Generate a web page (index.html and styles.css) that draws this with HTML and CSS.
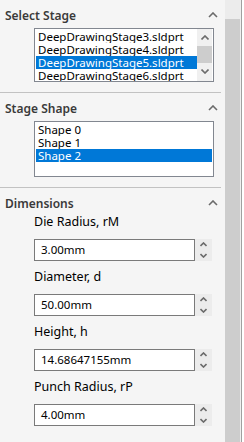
FILE: index.html
```html
<!DOCTYPE html>
<html lang="en">
<head>
    <meta charset="UTF-8">
    <meta name="viewport" content="width=device-width, initial-scale=1.0">
    <title>Deep Drawing Stage</title>
    <link rel="stylesheet" href="styles.css">
</head>
<body>
    <div class="window">
        <div class="panel">
            <!-- Stage picker -->
            <section class="group">
                <div class="group-head">
                    <span>Select Stage</span>
                    <svg class="chevron" width="10" height="6" viewBox="0 0 10 6"><polyline points="1,5 5,1 9,5"/></svg>
                </div>
                <div class="listbox stages">
                    <ul class="items">
                        <li>DeepDrawingStage3.sldprt</li>
                        <li>DeepDrawingStage4.sldprt</li>
                        <li class="selected">DeepDrawingStage5.sldprt</li>
                        <li>DeepDrawingStage6.sldprt</li>
                    </ul>
                    <div class="vscroll">
                        <div class="vbtn"><svg width="8" height="5" viewBox="0 0 8 5"><polyline points="0.5,4.5 4,1 7.5,4.5"/></svg></div>
                        <div class="vthumb"></div>
                        <div class="vbtn"><svg width="8" height="5" viewBox="0 0 8 5"><polyline points="0.5,0.5 4,4 7.5,0.5"/></svg></div>
                    </div>
                </div>
            </section>

            <!-- Shape picker -->
            <section class="group">
                <div class="group-head">
                    <span>Stage Shape</span>
                    <svg class="chevron" width="10" height="6" viewBox="0 0 10 6"><polyline points="1,5 5,1 9,5"/></svg>
                </div>
                <div class="listbox shapes">
                    <ul class="items">
                        <li>Shape 0</li>
                        <li>Shape 1</li>
                        <li class="selected">Shape 2</li>
                    </ul>
                </div>
            </section>

            <!-- Dimension fields -->
            <section class="group dims">
                <div class="group-head">
                    <span>Dimensions</span>
                    <svg class="chevron" width="10" height="6" viewBox="0 0 10 6"><polyline points="1,5 5,1 9,5"/></svg>
                </div>
                <div class="field">
                    <label>Die Radius, rM</label>
                    <div class="spin-row">
                        <div class="value">3.00mm</div>
                        <div class="spinner">
                            <div class="spin-btn"><svg width="7" height="5" viewBox="0 0 7 5"><polyline points="0.5,4 3.5,1 6.5,4"/></svg></div>
                            <div class="spin-btn"><svg width="7" height="5" viewBox="0 0 7 5"><polyline points="0.5,1 3.5,4 6.5,1"/></svg></div>
                        </div>
                    </div>
                </div>
                <div class="field">
                    <label>Diameter, d</label>
                    <div class="spin-row">
                        <div class="value">50.00mm</div>
                        <div class="spinner">
                            <div class="spin-btn"><svg width="7" height="5" viewBox="0 0 7 5"><polyline points="0.5,4 3.5,1 6.5,4"/></svg></div>
                            <div class="spin-btn"><svg width="7" height="5" viewBox="0 0 7 5"><polyline points="0.5,1 3.5,4 6.5,1"/></svg></div>
                        </div>
                    </div>
                </div>
                <div class="field">
                    <label>Height, h</label>
                    <div class="spin-row">
                        <div class="value">14.68647155mm</div>
                        <div class="spinner">
                            <div class="spin-btn"><svg width="7" height="5" viewBox="0 0 7 5"><polyline points="0.5,4 3.5,1 6.5,4"/></svg></div>
                            <div class="spin-btn"><svg width="7" height="5" viewBox="0 0 7 5"><polyline points="0.5,1 3.5,4 6.5,1"/></svg></div>
                        </div>
                    </div>
                </div>
                <div class="field">
                    <label>Punch Radius, rP</label>
                    <div class="spin-row">
                        <div class="value">4.00mm</div>
                        <div class="spinner">
                            <div class="spin-btn"><svg width="7" height="5" viewBox="0 0 7 5"><polyline points="0.5,4 3.5,1 6.5,4"/></svg></div>
                            <div class="spin-btn"><svg width="7" height="5" viewBox="0 0 7 5"><polyline points="0.5,1 3.5,4 6.5,1"/></svg></div>
                        </div>
                    </div>
                </div>
            </section>
        </div>

        <div class="scrollbar">
            <div class="track"></div>
            <div class="thumb"></div>
        </div>
        <div class="edge"></div>
    </div>
</body>
</html>
```

FILE: styles.css
```css
body {
    margin: 0;
    padding: 0;
    background-color: #f5f5f5;
    font-family: "Noto Sans", "Liberation Sans", sans-serif;
    font-size: 11.5px;
    color: #000;
    overflow: hidden;
}

.window {
    display: flex;
    height: 442px;
}

.panel {
    width: 225px;
    flex: none;
}

.group {
    width: 221px;
    border-bottom: 1px solid #c2c2c2;
    padding-bottom: 10px;
}

.group.dims {
    border-bottom: none;
}

.group-head {
    display: flex;
    justify-content: space-between;
    align-items: center;
    padding: 7px 3px 5px 5px;
    height: 16px;
    font-weight: 600;
    font-size: 12px;
    color: #3a3a3a;
}

.dims .group-head {
    padding-bottom: 3px;
}

.chevron polyline,
.vbtn polyline,
.spin-btn polyline {
    fill: none;
    stroke: #6b6b6b;
    stroke-width: 1.6;
}

.listbox {
    margin-left: 34px;
    width: 176px;
    border: 1px solid #828790;
    background-color: white;
    padding: 1px;
    display: flex;
}

.listbox.stages {
    height: 50px;
    overflow: hidden;
}

.listbox.shapes {
    height: 52px;
}

.items {
    list-style: none;
    margin: 0;
    padding: 0;
    flex: 1;
    min-width: 0;
}

.items li {
    height: 13px;
    line-height: 13px;
    padding-left: 2px;
    white-space: nowrap;
    overflow: hidden;
}

.items li.selected {
    background-color: #0078d7;
    color: white;
}

.vscroll {
    width: 15px;
    flex: none;
    margin-top: -1px;
    margin-bottom: -1px;
    background-color: #f0f0f0;
    display: flex;
    flex-direction: column;
}

.vbtn {
    height: 17px;
    display: flex;
    align-items: center;
    justify-content: center;
}

.vthumb {
    height: 17px;
    background-color: #cdcdcd;
}

.field label {
    display: block;
    margin: 8px 0 9px 34px;
    line-height: 16px;
    font-size: 12.5px;
}

.field:nth-of-type(2) label {
    margin-top: 0;
}

.spin-row {
    display: flex;
    margin-left: 34px;
}

.value {
    width: 153px;
    height: 20px;
    line-height: 20px;
    border: 1px solid #7a7a7a;
    background-color: white;
    padding-left: 6px;
}

.spinner {
    width: 17px;
    display: flex;
    flex-direction: column;
}

.spin-btn {
    height: 11px;
    background-color: #ececec;
    display: flex;
    align-items: center;
    justify-content: center;
}

.scrollbar {
    width: 15px;
    flex: none;
    display: flex;
    flex-direction: column;
    background-color: #cdcdcd;
}

.track {
    height: 19px;
    background-color: #ececec;
}

.thumb {
    flex: 1;
}

.edge {
    width: 4px;
    flex: none;
    background: linear-gradient(to right, #efefef 0 1px, #a0a0a0 1px 2px, #ffffff 2px);
}
```
